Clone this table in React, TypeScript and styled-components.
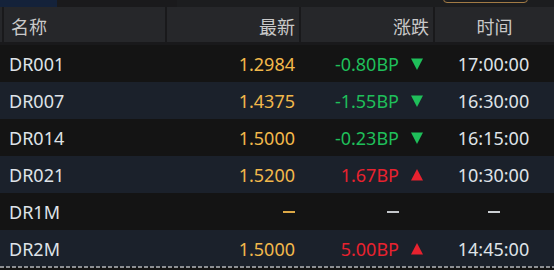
import React from "react";
import styled, { createGlobalStyle } from "styled-components";

type Dir = "up" | "down" | null;

interface Quote {
  name: string;
  latest: string | null;
  change: string | null;
  dir: Dir;
  time: string | null;
}

const quotes: Quote[] = [
  { name: "DR001", latest: "1.2984", change: "-0.80BP", dir: "down", time: "17:00:00" },
  { name: "DR007", latest: "1.4375", change: "-1.55BP", dir: "down", time: "16:30:00" },
  { name: "DR014", latest: "1.5000", change: "-0.23BP", dir: "down", time: "16:15:00" },
  { name: "DR021", latest: "1.5200", change: "1.67BP", dir: "up", time: "10:30:00" },
  { name: "DR1M", latest: null, change: null, dir: null, time: null },
  { name: "DR2M", latest: "1.5000", change: "5.00BP", dir: "up", time: "14:45:00" },
];

const GlobalStyle = createGlobalStyle`
  html, body {
    margin: 0;
    padding: 0;
    background: #141414;
  }
  body {
    font-family: "Noto Sans", "Noto Sans CJK SC", sans-serif;
    width: 554px;
    height: 270px;
    overflow: hidden;
  }
`;

const Panel = styled.div`
  width: 554px;
  height: 270px;
  background: #141414;
  display: flex;
  flex-direction: column;
`;

const TopStrip = styled.div`
  height: 7px;
  flex-shrink: 0;
  display: flex;
  overflow: hidden;
  background: #1c1d1f;
`;

const StripTab = styled.div<{ $w: number; $bg: string }>`
  width: ${(p) => p.$w}px;
  background: ${(p) => p.$bg};
`;

const StripButton = styled.div`
  margin-left: 266px;
  margin-top: -17px;
  width: 85px;
  height: 20px;
  box-sizing: border-box;
  border: 1px solid #a27b45;
  border-radius: 4px;
`;

const Grid = styled.div`
  display: grid;
  grid-template-columns: 165px 134px 134px 121px;
  flex-shrink: 0;
`;

const HeaderRow = styled(Grid)`
  height: 35px;
  background: #26272a;
  border-bottom: 3px solid #19191b;
`;

const HeadCell = styled.div<{ $align: "left" | "right" | "center"; $first?: boolean }>`
  display: flex;
  align-items: center;
  padding-top: 3px;
  box-sizing: border-box;
  justify-content: ${(p) =>
    p.$align === "left" ? "flex-start" : p.$align === "right" ? "flex-end" : "center"};
  padding-left: ${(p) => (p.$first ? "9px" : "0")};
  padding-right: ${(p) => (p.$align === "right" ? "4px" : "0")};
  border-left: 2px solid #19191b;
  color: #c9c9c9;
  font-size: 18px;
  &:first-child {
    border-left: none;
    box-shadow: inset 2px 0 0 #19191b;
    margin-left: 2px;
  }
`;

const Row = styled(Grid)<{ $alt: boolean }>`
  height: 37px;
  background: ${(p) => (p.$alt ? "#1b212b" : "#141414")};
  font-size: 18px;
  color: #dfe3e8;
`;

const NameCell = styled.div`
  display: flex;
  align-items: center;
  padding-left: 9px;
`;

const LatestCell = styled.div`
  display: flex;
  align-items: center;
  justify-content: flex-end;
  padding-right: 4px;
  color: #f2b84b;
`;

const ChangeCell = styled.div<{ $dir: Dir }>`
  display: flex;
  align-items: center;
  justify-content: flex-end;
  padding-right: 10px;
  color: ${(p) => (p.$dir === "up" ? "#e8222f" : p.$dir === "down" ? "#1fbf5a" : "#d6d9de")};
`;

const Arrow = styled.span`
  width: 24px;
  display: flex;
  justify-content: flex-end;
  align-items: center;
`;

const TimeCell = styled.div`
  display: flex;
  align-items: center;
  justify-content: center;
`;

const Dash = styled.span`
  display: inline-block;
  width: 12px;
  height: 2px;
  background: currentColor;
  opacity: 0.9;
`;

const Footer = styled.div`
  margin-top: -1px;
  height: 2px;
  flex-shrink: 0;
  background-image: repeating-linear-gradient(
    to right,
    #8d8f93 0 4px,
    transparent 4px 6px
  );
`;

const Triangle: React.FC<{ dir: "up" | "down" }> = ({ dir }) => (
  <svg width="12" height="12" viewBox="0 0 12 12">
    {dir === "down" ? (
      <polygon points="0,0.5 12,0.5 6,12" fill="currentColor" />
    ) : (
      <polygon points="0,11.5 12,11.5 6,0" fill="currentColor" />
    )}
  </svg>
);

const App: React.FC = () => {
  return (
    <>
      <GlobalStyle />
      <Panel>
        <TopStrip>
          <StripTab $w={57} $bg="#14223a" />
          <StripTab $w={120} $bg="#1a1a1c" />
          <StripButton />
        </TopStrip>
        <HeaderRow>
          <HeadCell $align="left" $first>名称</HeadCell>
          <HeadCell $align="right">最新</HeadCell>
          <HeadCell $align="right">涨跌</HeadCell>
          <HeadCell $align="center">时间</HeadCell>
        </HeaderRow>
        {quotes.map((q, i) => (
          <Row key={q.name} $alt={i % 2 === 1}>
            <NameCell>{q.name}</NameCell>
            <LatestCell>{q.latest ?? <Dash />}</LatestCell>
            <ChangeCell $dir={q.dir}>
              {q.change ?? <Dash />}
              <Arrow>{q.dir && <Triangle dir={q.dir} />}</Arrow>
            </ChangeCell>
            <TimeCell>{q.time ?? <Dash />}</TimeCell>
          </Row>
        ))}
        <Footer />
      </Panel>
    </>
  );
};

export default App;
